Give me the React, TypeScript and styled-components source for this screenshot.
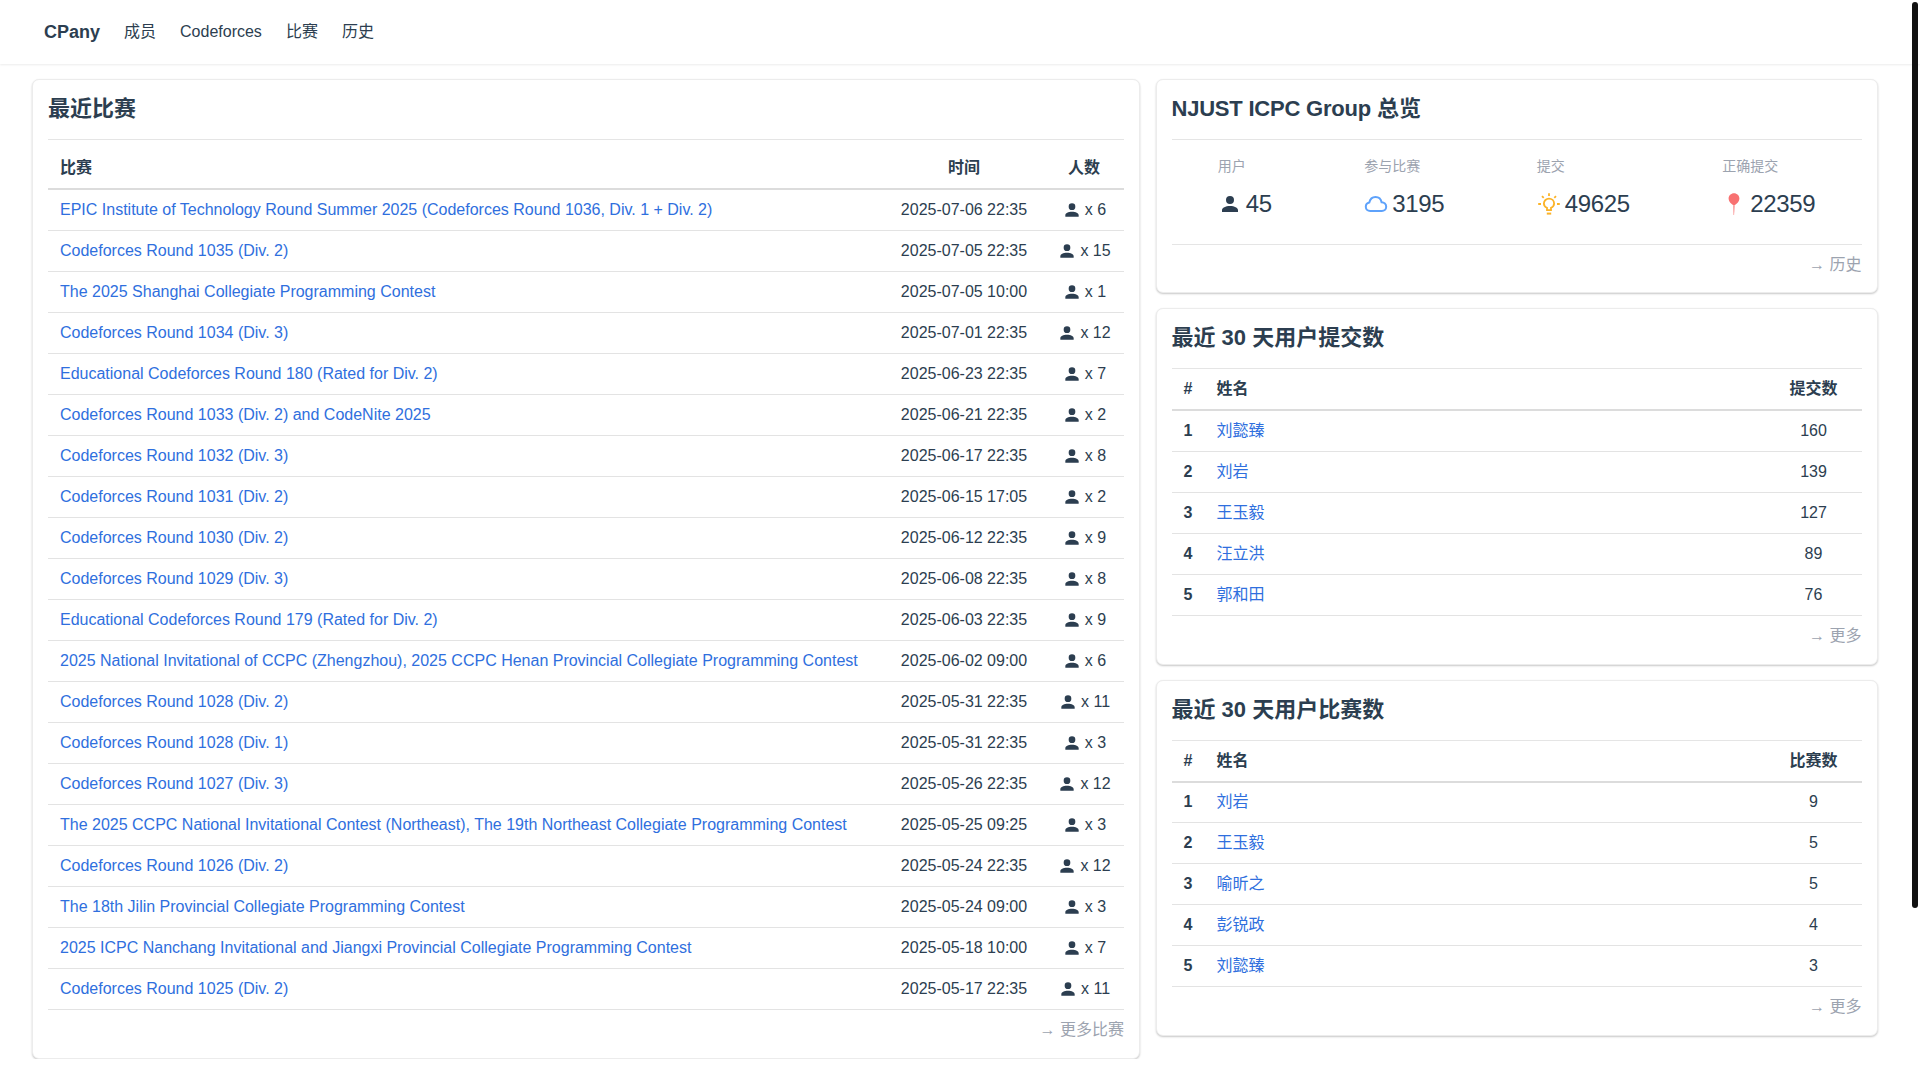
import React from "react";
import styled, { createGlobalStyle } from "styled-components";

const GlobalStyle = createGlobalStyle`
  html, body {
    margin: 0;
    padding: 0;
    background: #ffffff;
    overflow: hidden;
  }

  body {
    font-family: Arial, "Liberation Sans", "Noto Sans CJK SC", sans-serif;
    font-size: 16px;
    line-height: 24px;
    color: #2c3e50;
  }

  a {
    text-decoration: none;
    color: inherit;
  }
`;

const Navbar = styled.nav`
  height: 64px;
  display: flex;
  align-items: center;
  gap: 24px;
  padding: 0 44px;
  background: #ffffff;
  box-shadow: 0 1px 2px rgba(0, 0, 0, 0.08);
`;

const Brand = styled.a`
  font-size: 18px;
  font-weight: 700;
`;

const NavLink = styled.a`
  font-size: 16px;
`;

const Main = styled.main`
  display: grid;
  grid-template-columns: 1108px 722px;
  gap: 15.5px;
  align-items: start;
  padding: 15px 0 0 32px;
`;

const Column = styled.div`
  display: flex;
  flex-direction: column;
  gap: 15px;
`;

const Card = styled.section`
  box-sizing: border-box;
  padding: 15px 15px 0;
  background: #ffffff;
  border: 1px solid #ececec;
  border-radius: 7px;
  box-shadow: 0 1px 2px rgba(0, 0, 0, 0.22);
`;

const CardTitle = styled.h2`
  margin: 0;
  height: 45px;
  padding-top: 2px;
  box-sizing: border-box;
  font-size: 22px;
  line-height: 24px;
  font-weight: 700;
  border-bottom: 1px solid #e5e5e5;
`;

const TitleLatin = styled.span`
  letter-spacing: -0.22px;
`;

const Table = styled.table<{ $gap?: number }>`
  width: 100%;
  margin-top: ${(p) => p.$gap || 0}px;
  border-collapse: collapse;
  table-layout: fixed;
`;

const Th = styled.th<{ $width?: number; $align?: string }>`
  width: ${(p) => (p.$width ? `${p.$width}px` : "auto")};
  height: 41px;
  padding: 0 12px;
  box-sizing: border-box;
  text-align: ${(p) => p.$align || "left"};
  font-weight: 700;
  border-bottom: 2px solid #dcdcdc;
`;

const Td = styled.td<{ $align?: string; $bold?: boolean }>`
  height: 41px;
  padding: 0 12px;
  box-sizing: border-box;
  text-align: ${(p) => p.$align || "left"};
  font-weight: ${(p) => (p.$bold ? 700 : 400)};
  white-space: nowrap;
  border-bottom: 1px solid #e3e3e3;
`;

const TableLink = styled.a`
  color: #2f6fde;
`;

const PeopleCell = styled.span`
  display: inline-flex;
  align-items: center;
  gap: 3px;
  vertical-align: top;
`;

const MoreRow = styled.div<{ $height?: number }>`
  height: ${(p) => p.$height || 48}px;
  padding-top: 8px;
  box-sizing: border-box;
  text-align: right;
  color: #9ca3af;
`;

const StatRow = styled.div`
  display: flex;
  justify-content: space-around;
  height: 105px;
  padding-top: 14px;
  box-sizing: border-box;
  border-bottom: 1px solid #e5e5e5;
`;

const Stat = styled.div`
  display: flex;
  flex-direction: column;
  gap: 12px;
`;

const StatLabel = styled.div`
  font-size: 14px;
  color: #9ca3af;
`;

const StatValue = styled.div`
  display: flex;
  align-items: center;
  gap: 4px;
  font-size: 24px;
  line-height: 28px;
  letter-spacing: -0.35px;
`;

const Scrollbar = styled.div`
  position: fixed;
  top: 2px;
  right: 2px;
  width: 6px;
  height: 906px;
  border-radius: 3px;
  background: #111111;
`;

const PersonIcon = ({ size }: { size: number }) => (
  <svg width={size} height={size} viewBox="0 0 24 24" fill="#2c3e50">
    <path d="M12 4a4 4 0 1 1 0 8 4 4 0 0 1 0-8zm0 10c4.42 0 8 1.79 8 4v2H4v-2c0-2.21 3.58-4 8-4z" />
  </svg>
);

const CloudIcon = () => (
  <svg width="24" height="24" viewBox="0 0 24 24" fill="none" stroke="#5ea2fb" strokeWidth="2">
    <path d="M6.2 18.900c-2.600 0-4.400-1.800-4.400-4.200 0-2.200 1.500-3.800 3.500-4.200C6 7.400 8.400 5 11.500 5c3.100 0 5.500 2.200 6.100 5.200 2.500.2 4.600 2 4.600 4.500 0 2.400-1.900 4.200-4.400 4.200z" />
  </svg>
);

const BulbIcon = () => (
  <svg width="24" height="24" viewBox="0 0 24 24" fill="none" stroke="#fbb328" strokeWidth="1.8">
    <path d="M10 18.200v-2.400c-1.800-.8-3.100-2.400-3.100-4.300C6.900 8.700 9.200 6.600 12 6.600s5.100 2.100 5.100 4.900c0 1.900-1.300 3.500-3.100 4.300v2.400z" />
    <path d="M9.800 21.600h4.400" strokeWidth="2" />
    <path d="M12 1.200v2.800M5 4.200l1.700 1.700M19 4.200l-1.700 1.700M1.200 12h2.800M20 12h2.800" />
  </svg>
);

const BalloonIcon = () => (
  <svg width="24" height="24" viewBox="0 0 24 24">
    <path d="M12 1.200c3 0 5.400 2.400 5.400 5.400 0 3-2.800 5.600-5.400 7.200-2.600-1.600-5.400-4.200-5.400-7.200 0-3 2.400-5.400 5.400-5.400z" fill="#f87171" />
    <path d="M11.200 13.500h1.500l-.6 9.500h-.6z" fill="#f98f8f" />
  </svg>
);

type Contest = [string, string, number];

const contests: Contest[] = [
  ["EPIC Institute of Technology Round Summer 2025 (Codeforces Round 1036, Div. 1 + Div. 2)", "2025-07-06 22:35", 6],
  ["Codeforces Round 1035 (Div. 2)", "2025-07-05 22:35", 15],
  ["The 2025 Shanghai Collegiate Programming Contest", "2025-07-05 10:00", 1],
  ["Codeforces Round 1034 (Div. 3)", "2025-07-01 22:35", 12],
  ["Educational Codeforces Round 180 (Rated for Div. 2)", "2025-06-23 22:35", 7],
  ["Codeforces Round 1033 (Div. 2) and CodeNite 2025", "2025-06-21 22:35", 2],
  ["Codeforces Round 1032 (Div. 3)", "2025-06-17 22:35", 8],
  ["Codeforces Round 1031 (Div. 2)", "2025-06-15 17:05", 2],
  ["Codeforces Round 1030 (Div. 2)", "2025-06-12 22:35", 9],
  ["Codeforces Round 1029 (Div. 3)", "2025-06-08 22:35", 8],
  ["Educational Codeforces Round 179 (Rated for Div. 2)", "2025-06-03 22:35", 9],
  ["2025 National Invitational of CCPC (Zhengzhou), 2025 CCPC Henan Provincial Collegiate Programming Contest", "2025-06-02 09:00", 6],
  ["Codeforces Round 1028 (Div. 2)", "2025-05-31 22:35", 11],
  ["Codeforces Round 1028 (Div. 1)", "2025-05-31 22:35", 3],
  ["Codeforces Round 1027 (Div. 3)", "2025-05-26 22:35", 12],
  ["The 2025 CCPC National Invitational Contest (Northeast), The 19th Northeast Collegiate Programming Contest", "2025-05-25 09:25", 3],
  ["Codeforces Round 1026 (Div. 2)", "2025-05-24 22:35", 12],
  ["The 18th Jilin Provincial Collegiate Programming Contest", "2025-05-24 09:00", 3],
  ["2025 ICPC Nanchang Invitational and Jiangxi Provincial Collegiate Programming Contest", "2025-05-18 10:00", 7],
  ["Codeforces Round 1025 (Div. 2)", "2025-05-17 22:35", 11],
];

const submissions: [string, number][] = [
  ["刘懿臻", 160],
  ["刘岩", 139],
  ["王玉毅", 127],
  ["汪立洪", 89],
  ["郭和田", 76],
];

const contestCounts: [string, number][] = [
  ["刘岩", 9],
  ["王玉毅", 5],
  ["喻昕之", 5],
  ["彭锐政", 4],
  ["刘懿臻", 3],
];

const stats = [
  { label: "用户", value: 45, icon: <PersonIcon size={24} /> },
  { label: "参与比赛", value: 3195, icon: <CloudIcon /> },
  { label: "提交", value: 49625, icon: <BulbIcon /> },
  { label: "正确提交", value: 22359, icon: <BalloonIcon /> },
];

const RankCard = ({ title, unit, rows }: { title: string; unit: string; rows: [string, number][] }) => (
  <Card>
    <CardTitle>{title}</CardTitle>
    <Table>
      <thead>
        <tr>
          <Th $width={33}>#</Th>
          <Th>姓名</Th>
          <Th $width={96} $align="center">{unit}</Th>
        </tr>
      </thead>
      <tbody>
        {rows.map(([name, count], i) => (
          <tr key={name}>
            <Td $bold>{i + 1}</Td>
            <Td><TableLink href="#">{name}</TableLink></Td>
            <Td $align="center">{count}</Td>
          </tr>
        ))}
      </tbody>
    </Table>
    <MoreRow>→ 更多</MoreRow>
  </Card>
);

const App = () => {
  return (
    <div>
      <GlobalStyle />
      <Navbar>
        <Brand href="#">CPany</Brand>
        <NavLink href="#">成员</NavLink>
        <NavLink href="#">Codeforces</NavLink>
        <NavLink href="#">比赛</NavLink>
        <NavLink href="#">历史</NavLink>
      </Navbar>
      <Main>
        <Card>
          <CardTitle>最近比赛</CardTitle>
          <Table $gap={8}>
            <thead>
              <tr>
                <Th>比赛</Th>
                <Th $width={160} $align="center">时间</Th>
                <Th $width={80} $align="center">人数</Th>
              </tr>
            </thead>
            <tbody>
              {contests.map(([name, time, people]) => (
                <tr key={name + time}>
                  <Td><TableLink href="#">{name}</TableLink></Td>
                  <Td $align="center">{time}</Td>
                  <Td $align="center">
                    <PeopleCell>
                      <PersonIcon size={20} />
                      x {people}
                    </PeopleCell>
                  </Td>
                </tr>
              ))}
            </tbody>
          </Table>
          <MoreRow>→ 更多比赛</MoreRow>
        </Card>
        <Column>
          <Card>
            <CardTitle><TitleLatin>NJUST ICPC Group</TitleLatin> 总览</CardTitle>
            <StatRow>
              {stats.map((s) => (
                <Stat key={s.label}>
                  <StatLabel>{s.label}</StatLabel>
                  <StatValue>
                    {s.icon}
                    {s.value}
                  </StatValue>
                </Stat>
              ))}
            </StatRow>
            <MoreRow $height={47}>→ 历史</MoreRow>
          </Card>
          <RankCard title="最近 30 天用户提交数" unit="提交数" rows={submissions} />
          <RankCard title="最近 30 天用户比赛数" unit="比赛数" rows={contestCounts} />
        </Column>
      </Main>
      <Scrollbar />
    </div>
  );
};

export default App;
